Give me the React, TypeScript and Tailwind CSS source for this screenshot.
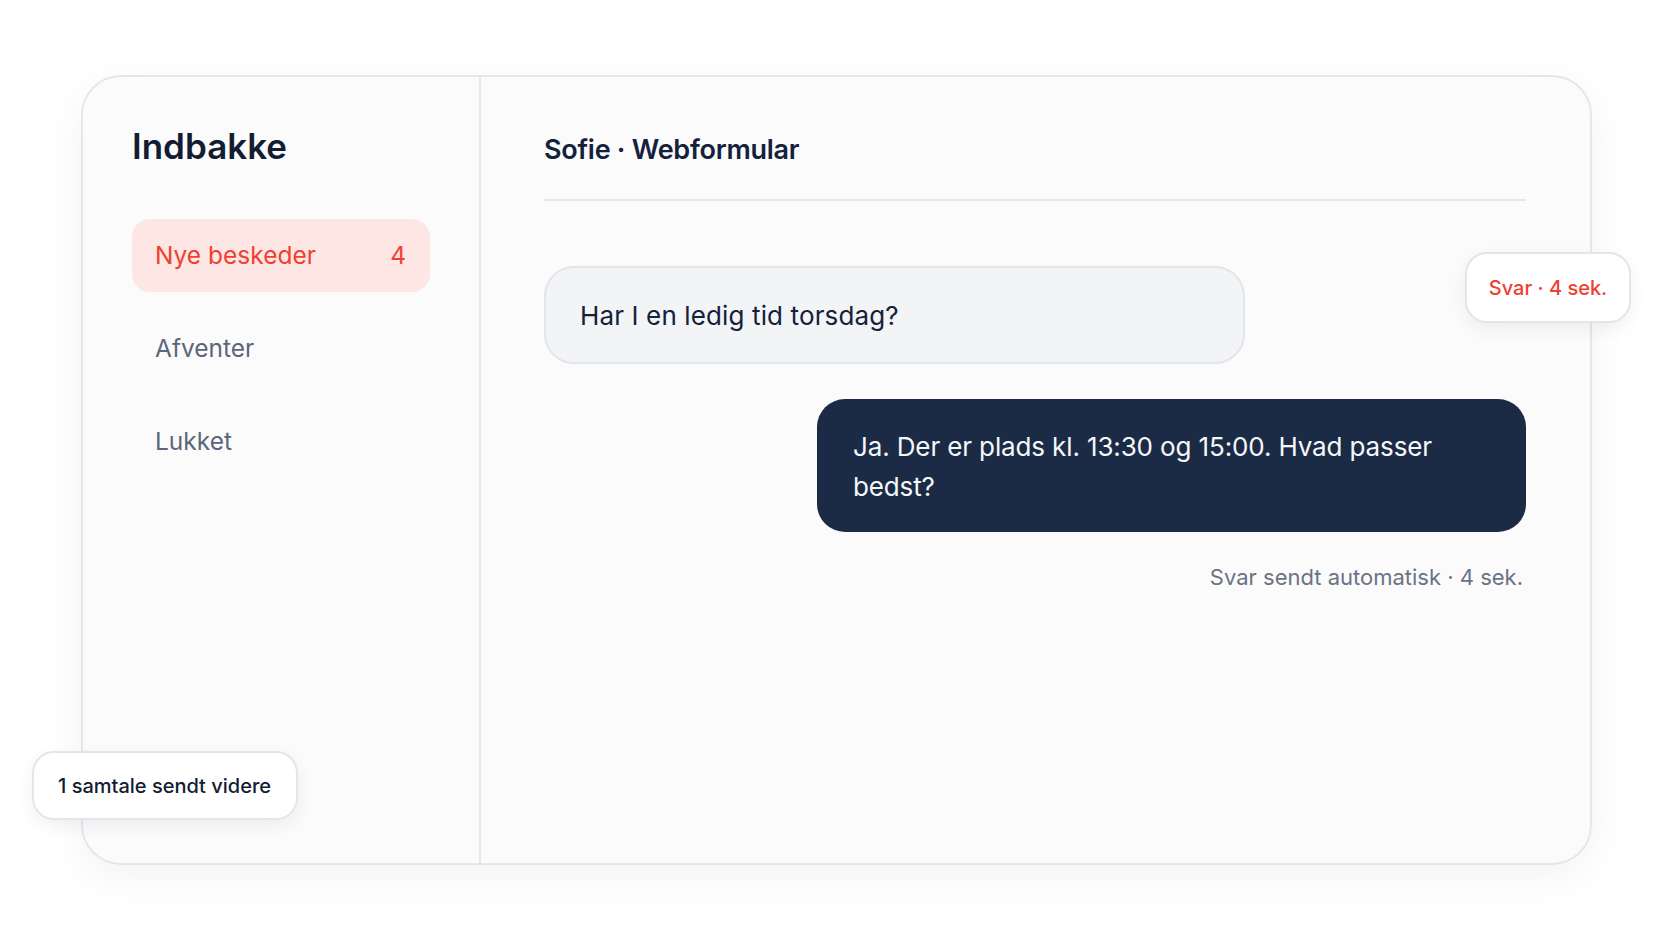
import React from "react";

export default function App() {
  return (
    <div className="w-full h-[941px] bg-white pt-[75px] pl-[81px] font-[Inter,sans-serif] overflow-hidden">
      <div className="relative w-[1511px] h-[790px] rounded-[40px] border-2 border-[#e4e7ec] bg-[#fbfbfc] shadow-[0_12px_40px_rgba(15,23,42,0.05)] flex">
        {/* Sidebar */}
        <aside className="w-[398px] shrink-0 border-r-2 border-[#e4e7ec] pl-[49px] pr-[49px] pt-[47px] flex flex-col">
          <h1 className="text-[35px] leading-[44px] font-semibold text-[#121c33]">Indbakke</h1>
          <nav className="mt-[51px] flex flex-col gap-[20px]">
            <div className="h-[73px] rounded-[18px] bg-[#fde6e3] flex items-center justify-between pl-[23px] pr-[24px] text-[24.5px] text-[#ef4130]">
              <span>Nye beskeder</span>
              <span>4</span>
            </div>
            <div className="h-[73px] flex items-center pl-[23px] text-[24.5px] text-[#5d6678]">Afventer</div>
            <div className="h-[73px] flex items-center pl-[23px] text-[24.5px] text-[#5d6678]">Lukket</div>
          </nav>
        </aside>

        {/* Main */}
        <main className="flex-1 pl-[63px] pr-[64px] pt-[57px] flex flex-col">
          <div className="pb-[33px] border-b-2 border-[#e4e7ec]">
            <h2 className="text-[27px] leading-[32px] font-semibold tracking-[-0.01em] text-[#14213a]">Sofie · Webformular</h2>
          </div>

          <div className="mt-[65px] w-[701px] h-[98px] rounded-[30px] border-2 border-[#e2e5ea] bg-[#f3f4f6] flex items-center pl-[34px]">
            <span className="text-[26px] text-[#14213a] tracking-[0.005em]">Har I en ledig tid torsdag?</span>
          </div>

          <div className="mt-[35px] self-end w-[709px] rounded-[28px] bg-[#1c2b45] pl-[36px] pr-[36px] pt-[28px] pb-[25px]">
            <p className="max-w-[600px] text-[26px] leading-[40px] text-[#f5f7fa] tracking-[-0.005em]">
              Ja. Der er plads kl. 13:30 og 15:00. Hvad passer bedst?
            </p>
          </div>

          <div className="mt-[31px] self-end pr-[3px] text-[22px] leading-[28px] text-[#6b7384]">
            Svar sendt automatisk · 4 sek.
          </div>
        </main>

        {/* Floating badges */}
        <div className="absolute left-[1382px] top-[175px] w-[166px] h-[71px] rounded-[22px] border-2 border-[#e2e5ea] bg-white shadow-[0_6px_18px_rgba(15,23,42,0.06)] flex items-center justify-center text-[20px] font-medium text-[#ef4130]">
          Svar · 4 sek.
        </div>
        <div className="absolute left-[-51px] top-[674px] w-[266px] h-[69px] rounded-[22px] border-2 border-[#e2e5ea] bg-white shadow-[0_6px_18px_rgba(15,23,42,0.06)] flex items-center pl-[24px] text-[20px] font-medium text-[#121c33]">
          1 samtale sendt videre
        </div>
      </div>
    </div>
  );
}
